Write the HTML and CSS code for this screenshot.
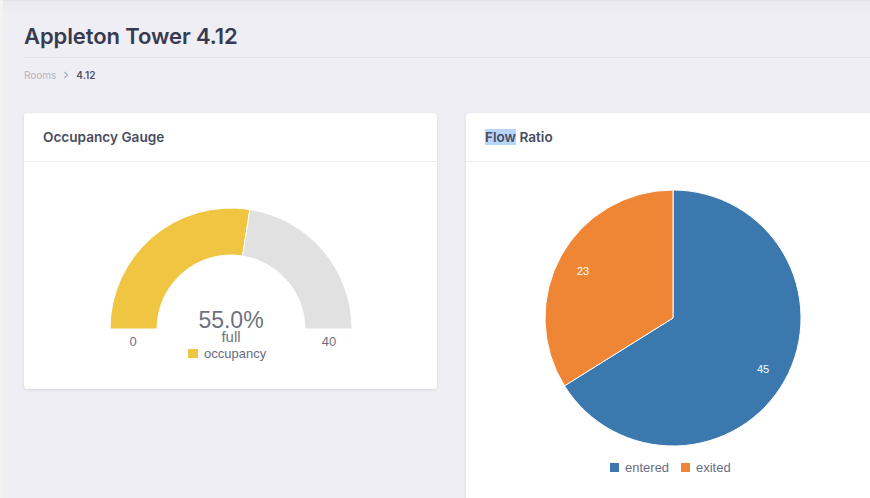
FILE: index.html
```html
<!DOCTYPE html>
<html>
<head>
<meta charset="utf-8">
<link rel="stylesheet" href="styles.css">
</head>
<body>
<div class="page">
  <header class="page-header">
    <h1 class="title">Appleton Tower 4.12</h1>
  </header>
  <nav class="crumbs">
    <span class="crumb-link">Rooms</span>
    <svg class="crumb-sep" width="6" height="8" viewBox="0 0 6 8"><path d="M1.5 1 L4.5 4 L1.5 7" fill="none" stroke="#a9a9b4" stroke-width="1.2"/></svg>
    <span class="crumb-current">4.12</span>
  </nav>
  <div class="cards">
    <section class="card card-gauge">
      <div class="card-head"><h2 class="card-title">Occupancy Gauge</h2></div>
      <div class="card-body">
        <svg class="chart" width="413" height="227" viewBox="0 0 413 227">
          <path d="M86,167 A121,121 0 0 1 225.93,47.49 L218.57,93.91 A74,74 0 0 0 133,167 Z" fill="#f0c542" stroke="#fff" stroke-width="1"/>
          <path d="M225.93,47.49 A121,121 0 0 1 328,167 L281,167 A74,74 0 0 0 218.57,93.91 Z" fill="#e1e1e1" stroke="#fff" stroke-width="1"/>
          <text class="g-value" x="207" y="166" text-anchor="middle">55.0%</text>
          <text class="g-unit" x="207" y="180" text-anchor="middle">full</text>
          <text class="g-tick" x="109" y="184" text-anchor="middle">0</text>
          <text class="g-tick" x="305" y="184" text-anchor="middle">40</text>
          <rect x="164" y="187" width="10" height="9" fill="#f0c542"/>
          <text class="g-legend" x="180" y="196">occupancy</text>
        </svg>
      </div>
    </section>
    <section class="card card-pie">
      <div class="card-head"><h2 class="card-title"><span class="sel">Flow</span> Ratio</h2></div>
      <div class="card-body">
        <svg class="chart" width="413" height="340" viewBox="0 0 413 340">
          <path d="M207,156 L207,28 A128,128 0 1 1 98.46,223.83 Z" fill="#3a78ad" stroke="#fff" stroke-width="1"/>
          <path d="M207,156 L98.46,223.83 A128,128 0 0 1 207,28 Z" fill="#ef8636" stroke="#fff" stroke-width="1"/>
          <text class="p-label" x="117" y="113" text-anchor="middle">23</text>
          <text class="p-label" x="297" y="211" text-anchor="middle">45</text>
          <rect x="144" y="301" width="9" height="9" fill="#3a78ad"/>
          <text class="p-legend" x="159" y="310">entered</text>
          <rect x="215" y="301" width="9" height="9" fill="#ef8636"/>
          <text class="p-legend" x="230" y="310">exited</text>
        </svg>
      </div>
    </section>
  </div>
</div>
</body>
</html>
```
FILE: styles.css
```css
html, body {
  margin: 0;
  padding: 0;
}
body {
  width: 870px;
  height: 498px;
  overflow: hidden;
  background: #efeef4;
  font-family: Inter, "Liberation Sans", sans-serif;
}
.page {
  height: 497px;
  border-top: 1px solid #e3e2e8;
  border-left: 3px solid #f3f3f6;
  padding-left: 21px;
  background: linear-gradient(#e9e8ee, #efeef4 12px);
}
.page-header {
  border-bottom: 1px solid #e4e3ea;
  padding-top: 22px;
  height: 34px;
}
.title {
  margin: 0;
  font-size: 22px;
  font-weight: 600;
  color: #383b50;
  line-height: 26px;
  letter-spacing: -0.1px;
}
.crumbs {
  display: flex;
  align-items: center;
  gap: 7px;
  height: 20px;
  margin-top: 7px;
  font-size: 10px;
}
.crumb-link {
  color: #b2b2bd;
}
.crumb-current {
  color: #505266;
  font-weight: 600;
}
.cards {
  display: flex;
  gap: 29px;
  margin-top: 28px;
  align-items: flex-start;
}
.card {
  flex: 0 0 413px;
  background: #fff;
  border-radius: 4px;
  box-shadow: 0 1px 3px rgba(60, 60, 100, 0.12);
}
.card-head {
  height: 48px;
  border-bottom: 1px solid #ebebf0;
  display: flex;
  align-items: center;
  padding-left: 19px;
}
.card-title {
  margin: 0;
  font-size: 13.6px;
  font-weight: 600;
  color: #4a4c60;
}
.sel {
  background: #b7d5fb;
}
.chart {
  display: block;
  font-family: "Liberation Sans", Arial, sans-serif;
}
.g-value {
  font-size: 23px;
  fill: #6f727e;
}
.g-unit {
  font-size: 15px;
  fill: #6f727e;
}
.g-tick {
  font-size: 13px;
  fill: #6f727e;
}
.g-legend {
  font-size: 13px;
  fill: #676a84;
}
.p-label {
  font-size: 11px;
  fill: #ffffff;
}
.p-legend {
  font-size: 13px;
  fill: #6a6c84;
}
```
